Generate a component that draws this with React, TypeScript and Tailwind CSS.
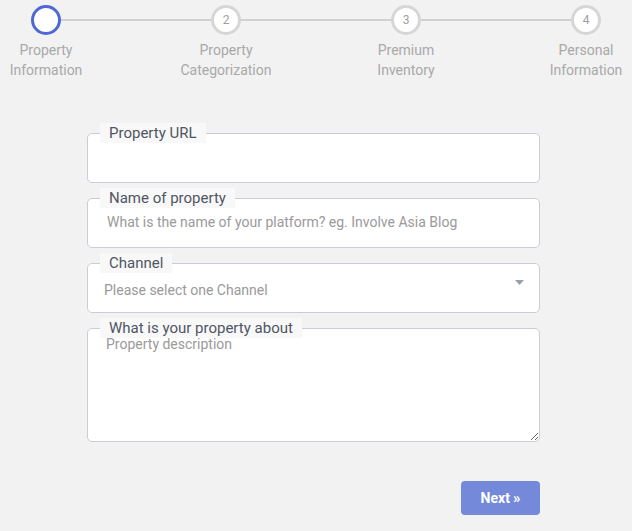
import React from 'react';

const steps = [
  { n: 1, title: ['Property', 'Information'] },
  { n: 2, title: ['Property', 'Categorization'] },
  { n: 3, title: ['Premium', 'Inventory'] },
  { n: 4, title: ['Personal', 'Information'] },
];

const Field: React.FC<{ label: string; children: React.ReactNode; tall?: boolean }> = ({ label, children, tall }) => (
  <div className={`relative rounded-[5px] border border-[#c9ced6] bg-white ${tall ? 'h-[114px]' : 'h-[50px]'}`}>
    <span className="absolute left-[12px] top-[-11px] bg-[#f8f8f8] px-[9px] text-[15px] leading-[20px] text-[#4f5663]">
      {label}
    </span>
    {children}
  </div>
);

export default function App() {
  return (
    <div className="min-h-[531px] w-[632px] bg-[#f2f2f2] font-['Roboto',sans-serif]">
      {/* stepper */}
      <div className="relative flex justify-between pt-[5px]">
        <div className="absolute left-[46px] right-[46px] top-[19px] h-[2px] bg-[#d0d0d0]" />
        {steps.map((s) => (
          <div key={s.n} className="relative flex w-[92px] flex-col items-center">
            <div
              className={`flex h-[30px] w-[30px] items-center justify-center rounded-full border-[3px] bg-white text-[12px] text-[#a0a0a0] ${
                s.n === 1 ? 'border-[#4e68d6]' : 'border-[#d6d6d6]'
              }`}
            >
              {s.n === 1 ? '' : s.n}
            </div>
            <div className="mt-[5px] text-center text-[14px] leading-[20px] text-[#a9a9a9]">
              {s.title[0]}
              <br />
              {s.title[1]}
            </div>
          </div>
        ))}
      </div>

      {/* form */}
      <div className="ml-[87px] mt-[53px] flex w-[453px] flex-col gap-[15px]">
        <Field label="Property URL">
          <input className="h-full w-full rounded-[5px] bg-transparent px-[18px] pt-[8px] text-[14px] outline-none" />
        </Field>
        <Field label="Name of property">
          <input
            placeholder="What is the name of your platform? eg. Involve Asia Blog"
            className="h-full w-full rounded-[5px] bg-transparent px-[19px] pb-[2px] text-[14px] text-[#444] outline-none placeholder:text-[#9a9a9a]"
          />
        </Field>
        <Field label="Channel">
          <div className="flex h-full items-center justify-between pl-[16px] pr-[15px] pt-[2px]">
            <span className="mt-[2px] text-[14px] text-[#9a9a9a]">Please select one Channel</span>
            <svg width="9" height="5" viewBox="0 0 9 5" className="mb-[14px]">
              <path d="M0 0 L9 0 L4.5 5 Z" fill="#9aa0a8" />
            </svg>
          </div>
        </Field>
        <Field label="What is your property about" tall>
          <textarea
            placeholder="Property description"
            className="h-full w-full resize rounded-[5px] bg-transparent px-[18px] pt-[5px] text-[14px] leading-[20px] text-[#444] outline-none placeholder:text-[#9a9a9a]"
          />
        </Field>
        <div className="mt-[24px] flex justify-end">
          <button className="flex h-[34px] w-[79px] items-center justify-center gap-[3px] rounded-[4px] bg-[#7489da] text-[14px] font-bold text-white">
            Next <span className="text-[15px] leading-none">»</span>
          </button>
        </div>
      </div>
    </div>
  );
}
